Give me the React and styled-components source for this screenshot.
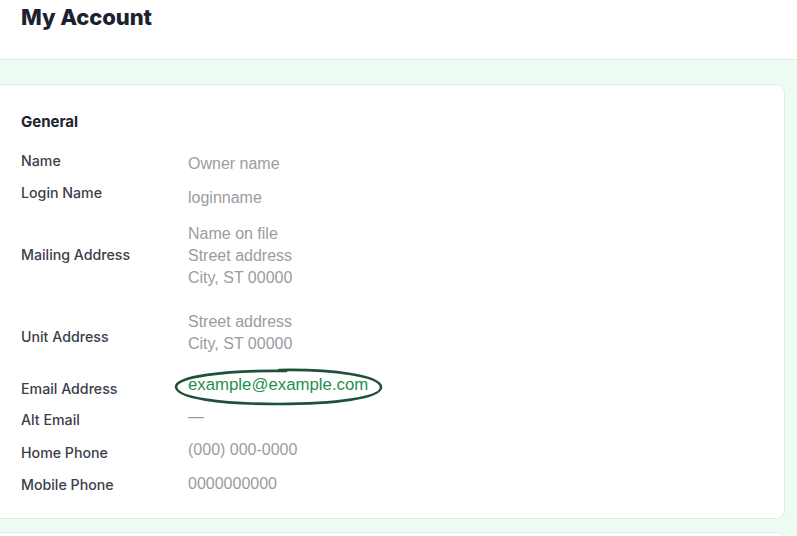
import React from "react";
import styled, { createGlobalStyle } from "styled-components";

const GlobalStyle = createGlobalStyle`
  html, body {
    margin: 0;
    padding: 0;
    background: #ffffff;
    overflow: hidden;
  }
  body {
    font-family: Inter, "Liberation Sans", sans-serif;
  }
`;

const colors = {
  mint: "#ecfcf3",
  border: "#e3e8e6",
  heading: "#1c2230",
  label: "#3a404b",
  value: "#9a9ca2",
  link: "#1f8f4e",
  ink: "#1f5139",
};

const Header = styled.header`
  height: 60px;
  border-bottom: 1px solid ${colors.border};
  padding: 5px 21px 0;
  box-sizing: border-box;
`;

const Title = styled.h1`
  margin: 0;
  font-size: 22px;
  font-weight: 800;
  line-height: 24px;
  color: ${colors.heading};
  letter-spacing: -0.1px;
`;

const Section = styled.main`
  background: ${colors.mint};
  padding: 24px 12px 0 0;
  display: flex;
  flex-direction: column;
  gap: 13px;
  min-height: 500px;
`;

const Card = styled.section`
  background: #ffffff;
  border: 1px solid ${colors.border};
  border-left: none;
  border-radius: 0 9px 9px 0;
  padding: 27px 21px 23px;
  min-height: ${props => props.minHeight || 0}px;
`;

const CardTitle = styled.h2`
  margin: 0 0 21px;
  font-size: 15px;
  font-weight: 700;
  line-height: 20px;
  color: ${colors.heading};
`;

const Row = styled.div`
  display: grid;
  grid-template-columns: 167px 1fr;
  align-items: center;
  margin-top: ${props => props.space || 0}px;
`;

const Label = styled.div`
  font-size: 14.2px;
  font-weight: 500;
  line-height: 20px;
  color: ${colors.label};
  transform: translateY(${props => props.shift || 0}px);
`;

const Value = styled.div`
  position: relative;
  font-family: "Liberation Sans", Arial, sans-serif;
  font-size: 16px;
  line-height: 22px;
  color: ${colors.value};
`;

const Line = styled.div``;

const EmailLink = styled.span`
  position: relative;
  color: ${colors.link};
  font-size: 16.8px;
`;

const Circle = styled.svg`
  position: absolute;
  left: -14px;
  top: -7px;
  width: 210px;
  height: 38px;
  overflow: visible;
  pointer-events: none;
`;

const rows = [
  { label: "Name", lines: ["Owner name"], space: 0, shift: -3 },
  { label: "Login Name", lines: ["loginname"], space: 12, shift: -5 },
  {
    label: "Mailing Address",
    lines: ["Name on file", "Street address", "City, ST 00000"],
    space: 14,
    shift: -1,
  },
  { label: "Unit Address", lines: ["Street address", "City, ST 00000"], space: 22, shift: 4 },
  { label: "Email Address", email: "example@example.com", space: 19, shift: 4 },
  { label: "Alt Email", lines: ["\u2014"], space: 10, shift: 3 },
  { label: "Home Phone", lines: ["(000) 000-0000"], space: 11, shift: 3 },
  { label: "Mobile Phone", lines: ["0000000000"], space: 12, shift: 1 },
];

const EmailValue = ({ email }) => (
  <EmailLink>
    {email}
    <Circle viewBox="0 0 210 38">
      <path
        d="M105 2 C160 1 206 8 207 19 C208 30 160 36 104 36 C46 36 3 30 2 19 C2 9 48 2 112 3"
        fill="none"
        stroke={colors.ink}
        strokeWidth="2.6"
        strokeLinecap="round"
      />
    </Circle>
  </EmailLink>
);

const App = () => (
  <>
    <GlobalStyle />
    <Header>
      <Title>My Account</Title>
    </Header>
    <Section>
      <Card>
        <CardTitle>General</CardTitle>
        {rows.map(row => (
          <Row key={row.label} space={row.space}>
            <Label shift={row.shift}>{row.label}</Label>
            <Value>
              {row.email ? (
                <EmailValue email={row.email} />
              ) : (
                row.lines.map(line => <Line key={line}>{line}</Line>)
              )}
            </Value>
          </Row>
        ))}
      </Card>
      <Card minHeight={120} />
    </Section>
  </>
);

export default App;
